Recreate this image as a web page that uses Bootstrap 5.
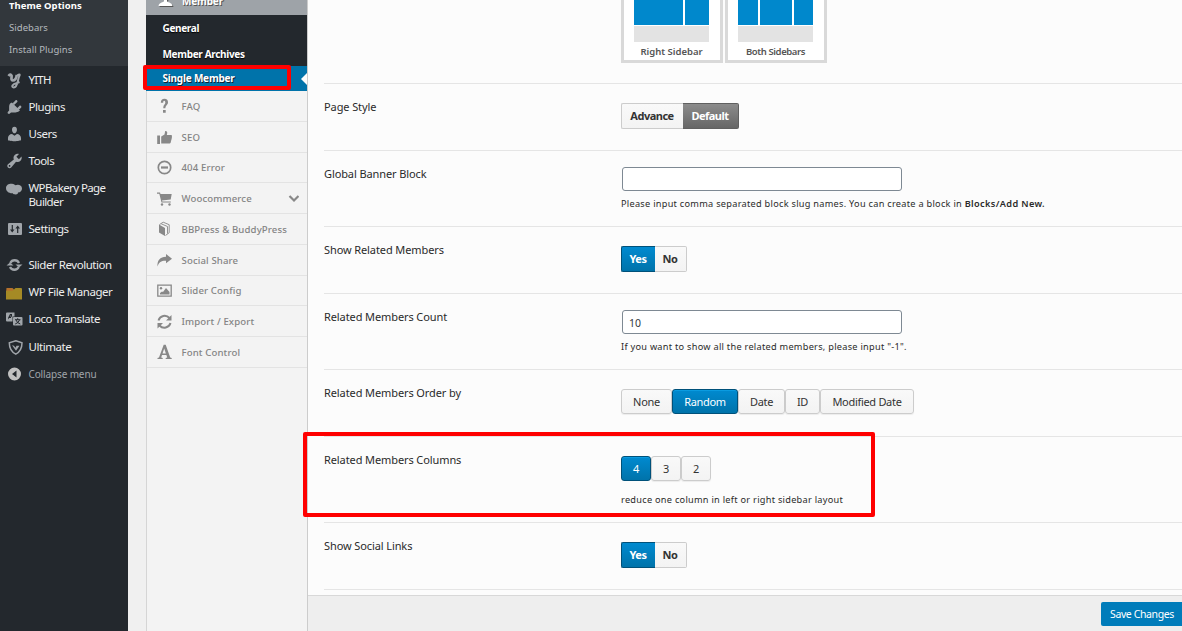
<!DOCTYPE html>
<html lang="en">
<head>
<meta charset="utf-8">
<meta name="viewport" content="width=device-width, initial-scale=1">
<title>Theme Options</title>
<link href="https://cdn.jsdelivr.net/npm/bootstrap@5.3.0/dist/css/bootstrap.min.css" rel="stylesheet">
<style>
body{font-family:"Noto Sans","Open Sans",sans-serif;background:#f0f0f0;height:631px;overflow:hidden;color:#222;font-size:11px;line-height:14px}
a{color:inherit;text-decoration:none}
svg{display:block;flex:none}
.app{height:631px}
/* admin menu */
.adminbar{width:128px;background:#23282d;color:#eee}
.submenu{height:66px;background:#32373c;padding-left:9px;font-size:9.5px;letter-spacing:.05px;color:#b4b9be}
.submenu a{height:22px;display:flex;align-items:center}
.submenu a:first-child{height:17px;padding-bottom:5px;color:#fff;font-weight:700}
.amenu{height:27px;padding-left:5px;gap:4.500px;display:flex;align-items:center;font-size:11.5px;letter-spacing:-.46px;color:#eee}
.amenu svg{width:19px;height:18px;fill:#a0a5aa;color:#a0a5aa}
.amenu.tall{height:41px;letter-spacing:-.6px}
.amenu.tall svg{margin-bottom:11px}
.amenu.low{height:27.4px}
.gap9{margin-top:9px}
.amenu.yith{letter-spacing:-.8px}
.amenu.collapser{font-size:10px;letter-spacing:-.13px;color:#a0a5aa}
.amenu.collapser svg{fill:#c0c0c0}
/* theme option tabs */
.tabs{width:162px;margin-left:18px;background:#f3f3f3;border-left:1px solid #d5d5d5;border-right:1px solid #ccc}
.tab-head{height:15px;padding-left:11px;gap:8px;background:#9ea3a8;color:#fff;margin-left:-1px;overflow:hidden;font-weight:700;font-size:10px;letter-spacing:-.15px;text-shadow:1px 1px 0 #555}
.tab-head svg{width:17px;height:16px;margin-top:-8px;fill:#fff;filter:drop-shadow(1px 1px 0 #555)}
.tab-head span{margin-top:-6px;height:14px}
.tab-sub a{height:25px;margin-left:-1px;padding-left:16.500px;display:flex;align-items:center;background:#23282d;color:#fff;font-weight:700;font-size:10px;letter-spacing:-.33px;text-shadow:0 1px 1px #000}
.tab-sub a:first-child{height:26px}
.tab-sub a.current{background:#0073aa;position:relative;padding-bottom:2px;letter-spacing:-.21px;text-shadow:1px 1px 0 #123}
.tab-sub a.current::after{content:"";position:absolute;right:0;top:7px;border:6px solid transparent;border-right-color:#fcfcfc;border-left:0}
.tab-item{height:30.75px;border-bottom:1px solid #e3e3e3;padding-left:9px;padding-top:2px;gap:8.500px;display:flex;align-items:center;font-size:9.6px;font-weight:500;color:#848484;letter-spacing:.13px}
.tab-item svg{width:17px;height:16px;margin-bottom:1px;fill:#888;color:#888}
/* options */
.panel{background:#fcfcfc}
.opt{margin-left:16px;border-bottom:1px solid #e5e5e5;display:flex}
.opt>label{width:297px;padding-top:16px;font-size:11px;letter-spacing:-.1px;color:#2a2a2a}
.h67{height:67px}.h76{height:76px}.h86{height:86px}.h84{height:84px}
.ctl{padding-top:19px}
.ctl.field{padding-top:16px}
.form-control{width:280px;height:24px;min-height:0;margin-left:1px;border:1px solid #7e8993;border-radius:3px;padding:1px 6px 0;font-size:10.5px;line-height:21px;color:#32373c}
.note{font-size:9.2px;letter-spacing:.272px;line-height:14px;margin-top:6px;color:#2a2a2a;white-space:nowrap}
.note.far{margin-top:12px}
.note b{font-weight:600;letter-spacing:.36px}
.sw{height:26px;display:flex}
.sw span,.bs span{border:1px solid #ccc;background:linear-gradient(#f9f9f9,#f3f3f3);display:flex;align-items:center;justify-content:center;font-size:11px;letter-spacing:-.3px;color:#333;white-space:nowrap}
.sw span{font-weight:700;letter-spacing:-.5px;padding-right:1px}
.sw span:first-child{border-radius:2px 0 0 2px;border-right:0}
.sw span:last-child{border-radius:0 2px 2px 0;border-left:0}
.sw .on{background:linear-gradient(#008ad0,#0073aa);border-color:#00517a;color:#fff}
.sw .dark{background:linear-gradient(#8c8c8c,#666);border-color:#606060;color:#fff}
.bs{height:25px;display:flex}
.bs span{border-radius:3px;box-shadow:0 1px 1px #0001}
.bs .on{background:linear-gradient(#008ad0,#0073aa);border-color:#00517a;color:#fff;box-shadow:inset 0 1px 0 #0a9be0}
.w30{width:30px}.w32{width:32px}.w34{width:34px}.w35{width:35px}.w47{width:47px}.w51{width:51px}.w56{width:56px}.w62{width:62px}.w66{width:66px}.w94{width:94px}
.thumbs{gap:2px}
.thumb{width:102px;height:63px;border:3px solid #d9d9d9;border-top:0;background:#fff;padding:0 11px 0 10px;text-align:center;font-size:9.5px;font-weight:600;color:#555}
.thumb.both{letter-spacing:-.4px}
.thumb .cols{height:25px;gap:2px;display:flex}
.thumb .cols i{background:#0088cc;flex:1}
.thumb .cols i.side{flex:0 0 24px}.thumb .cols i.edge{flex:0 0 19.5px}
.thumb .foot{height:16px;margin:1px 0 3px;background:#e3e3e3}
.tail{height:5px}
.savebar{height:36px;border-top:1px solid #d8d8d8;background:#eee;padding-top:6px}
.savebar .btn{width:81px;height:24px;border:0;border-radius:2px 0 0 2px;background:#007cba;color:#fff;font-size:10.5px;letter-spacing:-.38px;padding:1px 0 0 1px;line-height:23px;white-space:nowrap}
.marker{position:absolute;border:4px solid #f00;border-radius:2px;pointer-events:none}
.mark-tab{left:143px;top:65px;width:148px;height:25px}
.mark-opt{left:303px;top:432px;width:572px;height:85px}
</style>
</head>
<body>
<div class="app d-flex position-relative">
<nav class="adminbar flex-shrink-0">
 <div class="submenu"><a href="#">Theme Options</a><a href="#">Sidebars</a><a href="#">Install Plugins</a></div>
 <a class="amenu yith" href="#"><svg viewBox="0 0 19 18"><path d="M3.500 5Q5.500 2.500 6.500 4.500C7 6 5.500 9.300 7.800 9.500c2 0 3.500-1.700 4-5.500" fill="none" stroke="currentColor" stroke-width="2.700"/><path d="M12 4.500q3.500-2 2.500 0C12.500 8 13 16.500 8.800 16.500c-2.800-.3-1.800-3.500 3.200-4.500l2.500-1" fill="none" stroke="currentColor" stroke-width="2"/></svg>YITH</a>
 <a class="amenu" href="#"><svg viewBox="0 0 20 20"><path d="M13.110 4.360 9.870 7.600 8 5.730l3.240-3.240c.35-.34 1.050-.2 1.560.32.520.51.660 1.210.310 1.550zm-5.110 1.770-.910-1.120 9.010 9.010-1.190.84c-.710.710-2.630 1.160-3.820 1.160H6.140L4.900 17.260c-.59.59-1.540.59-2.120 0-.59-.58-.59-1.530 0-2.120l1.240-1.240v-3.880c0-1.130.400-3.190 1.090-3.890L7.100 5zM12.370 11.900l3.240-3.240c.34-.35 1.040-.21 1.550.310.520.510.660 1.210.310 1.550l-3.240 3.250z"/></svg>Plugins</a>
 <a class="amenu" href="#"><svg viewBox="0 0 20 20"><path d="M10 9.250c-2.270 0-2.730-3.440-2.730-3.440C7 4.020 7.820 2 9.970 2c2.160 0 2.980 2.020 2.710 3.810 0 0-.41 3.440-2.680 3.440zm0 2.570L12.720 10c2.390 0 4.520 2.330 4.520 4.530v2.490s-3.650 1.130-7.240 1.130c-3.650 0-7.240-1.130-7.240-1.130v-2.490c0-2.250 1.940-4.480 4.470-4.480z"/></svg>Users</a>
 <a class="amenu" href="#"><svg viewBox="0 0 20 20"><path d="M16.680 9.770c-1.340 1.340-3.300 1.670-4.950.99l-5.410 6.520c-.99.990-2.590.990-3.580 0s-.99-2.590 0-3.570l6.520-5.420c-.68-1.650-.35-3.610.99-4.950 1.280-1.280 3.120-1.620 4.720-1.060l-2.890 2.890 2.820 2.820 2.860-2.870c.53 1.580.180 3.390-1.080 4.650zM3.810 16.210c.4.390 1.040.39 1.430 0 .4-.4.400-1.040 0-1.430-.39-.4-1.030-.4-1.430 0-.39.390-.39 1.030 0 1.430z"/></svg>Tools</a>
 <a class="amenu tall" href="#"><svg viewBox="0 0 19 18"><path d="M1 8c0-3 3-4.500 6-4.200 2 .2 3 1.200 3.500 1.500C13 4 17 5 17 8.500c0 2-1.500 4-4 4 0 2-2 2.200-3 1.800-1 .2-2-.3-2.200-1.100C4 13.500 1 11.500 1 8z"/></svg><span>WPBakery Page<br>Builder</span></a>
 <a class="amenu" href="#"><svg viewBox="0 0 19 18"><path fill-rule="evenodd" d="M4 3h12a1 1 0 0 1 1 1v10a1 1 0 0 1-1 1H4a1 1 0 0 1-1-1V4a1 1 0 0 1 1-1zm2.700 2v4.500H5l2.200 3 2.300-3H7.900V5zm5.400 8h1.200V8.500H15L12.700 5.500l-2.300 3h1.700z"/></svg>Settings</a>
 <a class="amenu low gap9" href="#"><svg viewBox="0 0 19 18"><path d="M5.300 7A4.800 4.800 0 0 1 14 7M13.700 11A4.800 4.800 0 0 1 5 11" fill="none" stroke="currentColor" stroke-width="2.300"/><path d="M1.500 9.500 5 6.500l3.500 3zM10.500 8.500h7L14 11.500z"/></svg>Slider Revolution</a>
 <a class="amenu low" href="#"><svg viewBox="0 0 19 18"><path d="M1.500 5h6l2 2v3H1z" fill="#b5712c"/><path d="M1 7.800h6.500L10.500 5H16a1 1 0 0 1 1 1v10.500H1z" fill="#a58a25"/></svg>WP File Manager</a>
 <a class="amenu low" href="#"><svg viewBox="0 0 19 18"><path fill-rule="evenodd" d="M2 2.500h7.500v4H7.500v5H2a1 1 0 0 1-1-1v-7a1 1 0 0 1 1-1zM3 9.500l1-1.500h2V7l1-.5V4H5L3 8zm2-3L6 5v1.500zM9 7h7.500a1 1 0 0 1 1 1v6.500a1 1 0 0 1-1 1H9a1 1 0 0 1-1-1V8a1 1 0 0 1 1-1z"/><path d="M10 9.700h5.500M12.700 8.200v1.500M14.500 10q-1 3-4.300 4M11 10q1 3 4.300 4" fill="none" stroke="#23282d"/></svg>Loco Translate</a>
 <a class="amenu low" href="#"><svg viewBox="0 0 19 18"><path d="M10.800 2.800 17 4.800c0 5-1 8.600-6.200 11.400C5.500 13.500 4.300 9.800 4.300 4.800z" fill="none" stroke="currentColor" stroke-width="1.500"/><path d="m7 7.300 2 .5 1.500 2 1-2h3l-3.500 5z"/></svg>Ultimate</a>
 <a class="amenu collapser" href="#"><svg viewBox="0 0 19 18"><path fill-rule="evenodd" d="M9.500 2.500a6.500 6.500 0 1 0 0 13 6.500 6.500 0 0 0 0-13zm2 3v7L7 9z"/></svg>Collapse menu</a>
</nav>
<aside class="tabs flex-shrink-0">
 <div class="tab-head d-flex"><svg viewBox="0 0 17 16"><path d="M8.500 0c2.500 0 3.200 2 3 4-.2 2-1 3.500-1.500 4v1.500c2 1 5 1.200 5.500 4.500h-14C2 10.700 5 10.500 7 9.500V8C6.500 7.500 5.700 6 5.500 4c-.2-2 .5-4 3-4z"/></svg><span>Member</span></div>
 <div class="tab-sub"><a href="#">General</a><a href="#">Member Archives</a><a class="current" href="#">Single Member</a></div>
 <a class="tab-item" href="#"><svg viewBox="0 0 17 16"><path d="M4.800 4.800C4.800 2.300 6.200.8 8.500.8S12 2.300 12 4.200c0 2.800-2.600 3-2.600 6H7.300c0-3.600 2-3.600 2-5.700 0-1-.4-1.700-1.100-1.700-.8 0-1 .7-1 2zM7 12h2.700v2.700H7z"/></svg>FAQ</a>
 <a class="tab-item" href="#"><svg viewBox="0 0 17 16"><path d="M1.200 6.500h2.800V15H1.200zM5.200 7.500 8.500 5.500l.7-3.500c1.500-.3 2.300.8 2 2.300L10.800 6H15c1.200 0 1.300 1.500.7 2 .5.600.3 1.500-.3 2 .3.700 0 1.400-.5 1.800.2.900-.2 1.700-.4 2.200-.5.500-1 .5-1.500.5H5.200z"/></svg>SEO</a>
 <a class="tab-item" href="#"><svg viewBox="0 0 17 16"><circle cx="8.500" cy="7.500" r="6.200" fill="none" stroke="currentColor" stroke-width="1.700"/><path d="M5 6.400h7v2.200H5z"/></svg>404 Error</a>
 <a class="tab-item" href="#"><svg viewBox="0 0 17 16"><path d="M1 1.500h3l.5 1.500H15.700l-1 5.500-8.700 1 .3 1h8.500v1H5.500L3.300 2.700H1z"/><circle cx="6" cy="13.500" r="1.200"/><circle cx="13.500" cy="13.500" r="1.200"/></svg>Woocommerce<svg class="ms-auto me-2" viewBox="0 0 17 16"><path d="m7.500 5 4.500 4.500L16.500 5" fill="none" stroke="currentColor" stroke-width="2.200"/></svg></a>
 <a class="tab-item" href="#"><svg viewBox="0 0 17 16"><path d="M3 3.500 9 7v8l-6-3.500z"/><path d="M3.500 3.500 7.200 1.200l6 2.500v8L9.500 14.500M5.200 2.800l6.300 2.700v7" fill="none" stroke="currentColor" stroke-width=".9"/></svg>BBPress &amp; BuddyPress</a>
 <a class="tab-item" href="#"><svg viewBox="0 0 17 16"><path d="M10 2l6 4.700-6 4.500V8.700C5.500 8.500 3 10 1.500 14.500 1 8.500 4 4.800 10 4.700z"/></svg>Social Share</a>
 <a class="tab-item" href="#"><svg viewBox="0 0 17 16"><path d="M1.800 2.200h13.400v11H1.800z" fill="none" stroke="currentColor" stroke-width="1.300"/><circle cx="5" cy="5.300" r="1.200"/><path d="M4 11.500V10l2-1.500 1 .5 3-4 3.500 4v2.500z"/></svg>Slider Config</a>
 <a class="tab-item" href="#"><svg viewBox="0 0 17 16"><path d="M2.500 6.500C4 1.500 10 .3 13.500 4M14.500 9C13 14 7 15.200 3.500 11.500" fill="none" stroke="currentColor" stroke-width="2"/><path d="M15.500 1v5.500h-5.500zM1.500 14.500V9H7z"/></svg>Import / Export</a>
 <a class="tab-item" href="#"><svg viewBox="0 0 17 16"><path fill-rule="evenodd" d="M7.700.8h2l4.500 12.700 1.500.5v1h-6v-1l1.500-.5-.8-2.500H6l-.8 2.500 1.500.5v1h-5.200v-1l1.500-.5zM8.200 4.500 6.500 9.500h3.400z"/></svg>Font Control</a>
</aside>
<main class="panel flex-grow-1 overflow-hidden">
 <div class="opt h84"><label></label><div class="thumbs d-flex">
  <div class="thumb"><div class="cols"><i></i><i class="side"></i></div><div class="foot"></div>Right Sidebar</div>
  <div class="thumb both"><div class="cols"><i class="edge"></i><i></i><i class="edge"></i></div><div class="foot"></div>Both Sidebars</div></div></div>
 <div class="opt h67"><label>Page Style</label><div class="ctl"><div class="sw"><span class="w62">Advance</span><span class="w56 dark">Default</span></div></div></div>
 <div class="opt h76"><label>Global Banner Block</label><div class="ctl field"><input class="form-control" type="text"><div class="note">Please input comma separated block slug names. You can create a block in <b>Blocks/Add New.</b></div></div></div>
 <div class="opt h67"><label>Show Related Members</label><div class="ctl"><div class="sw"><span class="w34 on">Yes</span><span class="w32">No</span></div></div></div>
 <div class="opt h76"><label>Related Members Count</label><div class="ctl field"><input class="form-control" type="text" value="10"><div class="note">If you want to show all the related members, please input "-1".</div></div></div>
 <div class="opt h67"><label>Related Members Order by</label><div class="ctl"><div class="bs"><span class="w51">None</span><span class="w66 on">Random</span><span class="w47">Date</span><span class="w35">ID</span><span class="w94">Modified Date</span></div></div></div>
 <div class="opt h86"><label>Related Members Columns</label><div class="ctl"><div class="bs"><span class="w30 on">4</span><span class="w30">3</span><span class="w30">2</span></div><div class="note far">reduce one column in left or right sidebar layout</div></div></div>
 <div class="opt h67"><label>Show Social Links</label><div class="ctl"><div class="sw"><span class="w34 on">Yes</span><span class="w32">No</span></div></div></div>
 <div class="tail"></div>
 <div class="savebar d-flex justify-content-end align-items-start"><button class="btn">Save Changes</button></div>
</main>
<div class="marker mark-tab"></div>
<div class="marker mark-opt"></div>
</div>
<script src="https://cdn.jsdelivr.net/npm/bootstrap@5.3.0/dist/js/bootstrap.bundle.min.js"></script>
</body>
</html>
